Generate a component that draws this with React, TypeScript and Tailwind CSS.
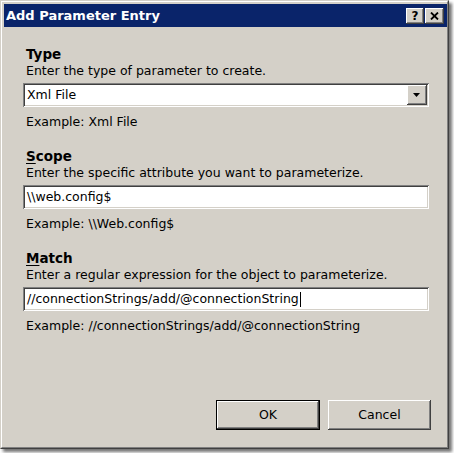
import React from "react";

const raised =
  "shadow-[inset_-1px_-1px_#404040,inset_1px_1px_#ffffff,inset_-2px_-2px_#808080,inset_2px_2px_#d4d0c8]";
const sunken =
  "shadow-[inset_1px_1px_#808080,inset_-1px_-1px_#ffffff,inset_2px_2px_#404040,inset_-2px_-2px_#d4d0c8]";

function Section({
  label,
  desc,
  example,
  children,
}: {
  label: React.ReactNode;
  desc: string;
  example: string;
  children: React.ReactNode;
}) {
  return (
    <div className="flex flex-col">
      <div className="h-[17px] leading-[16px] pl-[3px] text-[13.5px] font-bold text-black">{label}</div>
      <div className="h-[16px] leading-[16px] pl-[3px] text-[12.5px] text-black whitespace-nowrap">{desc}</div>
      <div className="mt-[4px]">{children}</div>
      <div className="mt-[7px] h-[16px] leading-[16px] pl-[3px] text-[12.5px] text-black whitespace-nowrap">
        {example}
      </div>
    </div>
  );
}

function Field({ value, caret }: { value: string; caret?: boolean }) {
  return (
    <div className={`h-[24px] bg-white ${sunken} flex items-center pl-[4px] text-[12.5px] text-black whitespace-nowrap`}>
      <span>{value}</span>
      {caret && <span className="inline-block w-[1px] h-[15px] bg-black ml-[1px]" />}
    </div>
  );
}

export default function App() {
  return (
    <div className="w-[454px] h-[453px] bg-white font-['DejaVu_Sans',sans-serif]">
      <div className="w-[449px] h-[449px] border border-t-[#d4d0c8] border-l-[#d4d0c8] border-r-[#404040] border-b-[#404040] shadow-[3px_3px_3px_rgba(0,0,0,0.55)]">
        <div className="h-full border border-t-white border-l-white border-r-[#808080] border-b-[#808080] bg-[#d4d0c8] pl-[2px] pt-[2px] flex flex-col">
          {/* Title bar */}
          <div className="h-[23px] bg-[#0a246a] flex items-center pl-[2px] pr-[3px]">
            <span className="text-white font-bold text-[13px] leading-none whitespace-nowrap">
              Add Parameter Entry
            </span>
            <div className="ml-auto flex gap-[1px]">
              <div className={`w-[18px] h-[16px] bg-[#d4d0c8] ${raised} flex items-center justify-center text-[12px] font-bold text-black leading-none`}>
                ?
              </div>
              <div className={`w-[19px] h-[16px] bg-[#d4d0c8] ${raised} flex items-center justify-center`}>
                <svg width="9" height="8" viewBox="0 0 9 8">
                  <path d="M1 0.5 L8 7.5 M8 0.5 L1 7.5" stroke="black" strokeWidth="1.8" />
                </svg>
              </div>
            </div>
          </div>

          {/* Content */}
          <div className="flex-1 flex flex-col pl-[19px] pr-[18px] pt-[19px] pb-[17px]">
            <div className="flex flex-col gap-[18px]">
              <Section
                label="Type"
                desc="Enter the type of parameter to create."
                example="Example: Xml File"
              >
                <div className={`h-[24px] bg-white ${sunken} flex items-center pl-[4px] pr-[2px] text-[12.5px] text-black`}>
                  <span>Xml File</span>
                  <div className={`ml-auto w-[20px] h-[20px] bg-[#d4d0c8] ${raised} flex items-center justify-center`}>
                    <svg width="8" height="4" viewBox="0 0 8 4">
                      <path d="M0 0 H7 L3.5 4 Z" fill="black" />
                    </svg>
                  </div>
                </div>
              </Section>
              <Section
                label={
                  <>
                    <span className="underline underline-offset-2">S</span>cope
                  </>
                }
                desc="Enter the specific attribute you want to parameterize."
                example="Example: \\Web.config$"
              >
                <Field value="\\web.config$" />
              </Section>
              <Section
                label={
                  <>
                    <span className="underline underline-offset-2">M</span>atch
                  </>
                }
                desc="Enter a regular expression for the object to parameterize."
                example="Example: //connectionStrings/add/@connectionString"
              >
                <Field value="//connectionStrings/add/@connectionString" caret />
              </Section>
            </div>

            <div className="mt-auto flex justify-end gap-[8px]">
              <div className="w-[104px] h-[30px] border border-black">
                <div className={`w-full h-full bg-[#d4d0c8] ${raised} flex items-center justify-center text-[12.5px] text-black`}>
                  OK
                </div>
              </div>
              <div className={`w-[103px] h-[30px] bg-[#d4d0c8] ${raised} flex items-center justify-center text-[12.5px] text-black -mr-[2px]`}>
                Cancel
              </div>
            </div>
          </div>
        </div>
      </div>
    </div>
  );
}
